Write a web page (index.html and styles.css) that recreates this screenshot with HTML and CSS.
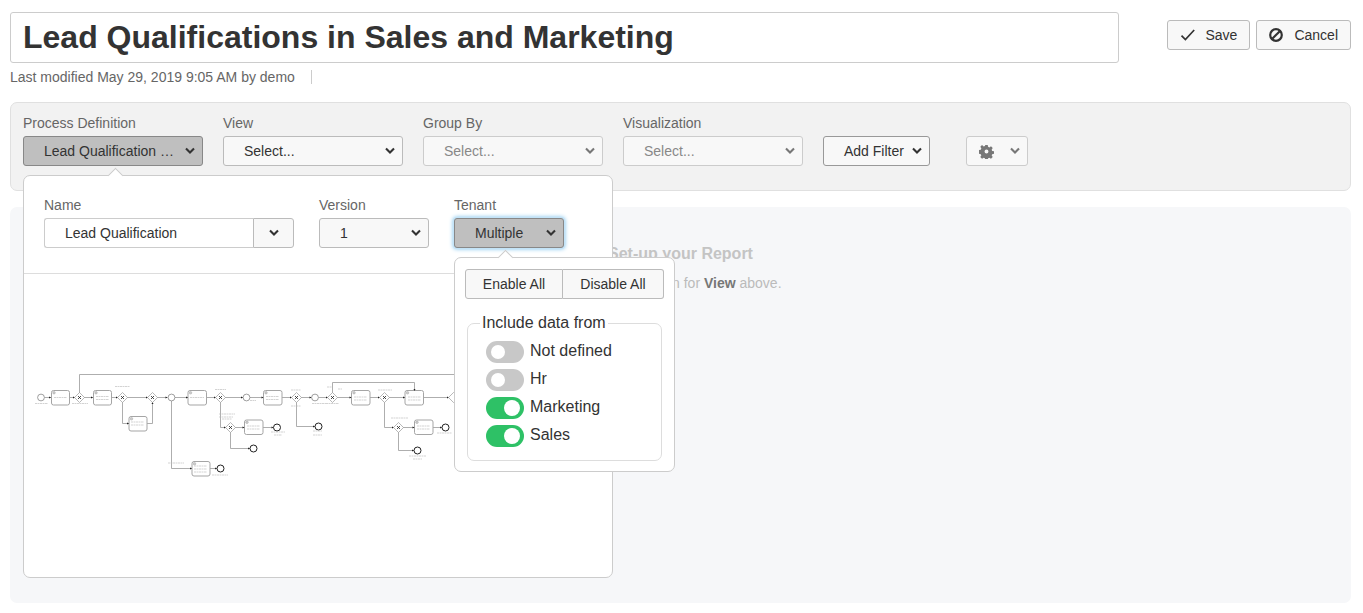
FILE: index.html
```html
<!DOCTYPE html>
<html lang="en">
<head>
<meta charset="utf-8">
<title>Lead Qualifications in Sales and Marketing</title>
<link rel="stylesheet" href="styles.css">
</head>
<body>
<svg class="defs" width="0" height="0" aria-hidden="true">
  <defs>
    <symbol id="chev" viewBox="0 0 10 8"><path d="M1 1.6 5 5.6 9 1.6" fill="none" stroke="currentColor" stroke-width="2.1"/></symbol>
  </defs>
</svg>
<main class="page">
  <header class="head">
    <div class="head-left">
      <input class="title-input" value="Lead Qualifications in Sales and Marketing">
      <div class="meta"><span>Last modified May 29, 2019 9:05 AM by demo</span><span class="meta-sep"></span></div>
    </div>
    <div class="head-actions">
      <button class="btn btn-save"><svg class="ico-check" viewBox="0 0 16 14"><path d="M1.5 7.6 5.4 11.6 14.2 2" fill="none" stroke="#333" stroke-width="1.7"/></svg>Save</button>
      <button class="btn btn-cancel"><svg class="ico-ban" viewBox="0 0 14 14"><circle cx="7" cy="7" r="5.8" fill="none" stroke="#333" stroke-width="2.2"/><path d="M3.2 10.8 10.8 3.2" stroke="#333" stroke-width="2.2"/></svg>Cancel</button>
    </div>
  </header>

  <section class="controls">
    <div class="field">
      <label class="lbl">Process Definition</label>
      <button class="select active"><span>Lead Qualification …</span><svg class="chev"><use href="#chev"/></svg></button>
      <div class="pop pop-def">
        <span class="arrow arrow-def"></span>
        <div class="def-form">
          <div class="def-name">
            <label class="lbl">Name</label>
            <div class="combo">
              <div class="combo-text">Lead Qualification</div>
              <button class="combo-btn"><svg class="chev"><use href="#chev"/></svg></button>
            </div>
          </div>
          <div class="def-version">
            <label class="lbl">Version</label>
            <button class="select"><span>1</span><svg class="chev"><use href="#chev"/></svg></button>
          </div>
          <div class="def-tenant">
            <label class="lbl">Tenant</label>
            <button class="select active focus"><span>Multiple</span><svg class="chev"><use href="#chev"/></svg></button>
            <div class="pop pop-tenant">
              <span class="arrow arrow-tenant"></span>
              <div class="btn-group">
                <button class="grp-btn grp-enable">Enable All</button>
                <button class="grp-btn grp-disable">Disable All</button>
              </div>
              <fieldset class="tenant-set">
                <legend>Include data from</legend>
                <div class="sw-row"><span class="sw"></span>Not defined</div>
                <div class="sw-row"><span class="sw"></span>Hr</div>
                <div class="sw-row"><span class="sw on"></span>Marketing</div>
                <div class="sw-row"><span class="sw on"></span>Sales</div>
              </fieldset>
            </div>
          </div>
        </div>
        <div class="diagram">
          <svg class="bpmn" viewBox="24 274 588 303" width="588" height="303">
            <g class="flow">
              <path d="M44.500 397.500H51M70 397.500H75M84 397.500H93M111.500 397.500H118M127 397.500H148M157 397.500H167.500M175 397.500H188M206.500 397.500H216M225 397.500H243M250 397.500H263.500M282 397.500H292.500M301 397.500H311.500M318.500 397.500H328.500M337 397.500H351.500M370 397.500H380M389 397.500H405M424 397.500H449"/>
              <path d="M79.500 393V374.500H455"/>
              <path d="M122.500 402V423.500H129M147 423.500H152.500V402"/>
              <path d="M171.500 401V468.500H192M210 468.500H217"/>
              <path d="M220.500 402V427.500H226M234.500 427.500H244.500M263 427.500H273.500"/>
              <path d="M230.500 432V448.500H250.500"/>
              <path d="M296.500 402V426.500H315"/>
              <path d="M332.500 393V382.500H414.500V391"/>
              <path d="M384.500 402V427.500H394.500M403 427.500H414.500M433 427.500H442"/>
              <path d="M398.500 432V450.500H414.500"/>
            </g>
            <g class="tasks">
              <rect x="51.500" y="390.500" width="18" height="14.500" rx="2"/>
              <rect x="93.500" y="390.500" width="18" height="14.500" rx="2"/>
              <rect x="129" y="416.500" width="18" height="14.500" rx="2"/>
              <rect x="188" y="390.500" width="18.500" height="14.500" rx="2"/>
              <rect x="192" y="461.500" width="18" height="14.500" rx="2"/>
              <rect x="244.500" y="420" width="18.500" height="14.500" rx="2"/>
              <rect x="263.500" y="390.500" width="18.500" height="14.500" rx="2"/>
              <rect x="351.500" y="390.500" width="18.500" height="14.500" rx="2"/>
              <rect x="405" y="390.500" width="18.500" height="14.500" rx="2"/>
              <rect x="414.500" y="420" width="18.500" height="14.500" rx="2"/>
            </g>
            <g class="task-gear">
              <circle cx="54" cy="392.800" r="1.300"/><circle cx="96" cy="392.800" r="1.300"/><circle cx="131.500" cy="418.800" r="1.300"/><circle cx="190.500" cy="392.800" r="1.300"/><circle cx="194.500" cy="463.800" r="1.300"/><circle cx="247" cy="422.300" r="1.300"/><circle cx="266" cy="392.800" r="1.300"/><circle cx="354" cy="392.800" r="1.300"/><circle cx="407.500" cy="392.800" r="1.300"/><circle cx="417" cy="422.300" r="1.300"/>
            </g>
            <path class="arrows" d="M51 397.500l-2-1v2ZM75 397.500l-2-1v2ZM93 397.500l-2-1v2ZM118 397.500l-2-1v2ZM148 397.500l-2-1v2ZM167.500 397.500l-2-1v2ZM188 397.500l-2-1v2ZM216 397.500l-2-1v2ZM243 397.500l-2-1v2ZM263.500 397.500l-2-1v2ZM292 397.500l-2-1v2ZM311.500 397.500l-2-1v2ZM328 397.500l-2-1v2ZM351.500 397.500l-2-1v2ZM380 397.500l-2-1v2ZM405 397.500l-2-1v2ZM449 397.500l-2-1v2ZM129 423.500l-2-1v2ZM152.500 402l-1 2h2ZM192 468.500l-2-1v2ZM217 468.500l-2-1v2ZM226 427.500l-2-1v2ZM244.500 427.500l-2-1v2ZM273.500 427.500l-2-1v2ZM250 448.500l-2-1v2ZM315 426.500l-2-1v2ZM414.500 391l-1-2h2ZM394 427.500l-2-1v2ZM414.500 427.500l-2-1v2ZM442 427.500l-2-1v2ZM414 450.500l-2-1v2Z"/>
            <g class="gw">
              <path d="M79.500 392.500 84.500 397.500 79.500 402.500 74.500 397.500Z"/>
              <path d="M122.500 392.500 127.500 397.500 122.500 402.500 117.500 397.500Z"/>
              <path d="M152.500 392.500 157.500 397.500 152.500 402.500 147.500 397.500Z"/>
              <path d="M220.500 392.500 225.500 397.500 220.500 402.500 215.500 397.500Z"/>
              <path d="M230.500 422.500 235.500 427.500 230.500 432.500 225.500 427.500Z"/>
              <path d="M296.500 392.500 301.500 397.500 296.500 402.500 291.500 397.500Z"/>
              <path d="M332.500 392.500 337.500 397.500 332.500 402.500 327.500 397.500Z"/>
              <path d="M384.500 392.500 389.500 397.500 384.500 402.500 379.500 397.500Z"/>
              <path d="M398.500 422.500 403.500 427.500 398.500 432.500 393.500 427.500Z"/>
              <path d="M453.500 392.500 458.500 397.500 453.500 402.500 448.500 397.500Z"/>
            </g>
            <path class="gwx" d="M78 396 81 399M81 396 78 399M121 396 124 399M124 396 121 399M151 396 154 399M154 396 151 399M219 396 222 399M222 396 219 399M229 426 232 429M232 426 229 429M295 396 298 399M298 396 295 399M331 396 334 399M334 396 331 399M383 396 386 399M386 396 383 399M397 426 400 429M400 426 397 429"/>
            <g class="start">
              <circle cx="41" cy="397.500" r="3.400"/>
              <circle cx="171.500" cy="397.500" r="3.400"/>
              <circle cx="246.500" cy="397.500" r="3.400"/>
              <circle cx="315" cy="397.500" r="3.400"/>
            </g>
            <g class="end">
              <circle cx="220.500" cy="468.500" r="3.500"/>
              <circle cx="253.500" cy="448.500" r="3.500"/>
              <circle cx="277" cy="427.500" r="3.500"/>
              <circle cx="318.500" cy="426.500" r="3.500"/>
              <circle cx="417.500" cy="450.500" r="3.500"/>
              <circle cx="445.500" cy="427.500" r="3.500"/>
            </g>
            <path class="labels" d="M35 403.500H48M72 403.500H88M96 396.500H109M96 399.500H109M54 397.500H67M215 389.500H226M115 386.500H130M131 422H144M131 425H144M190 397.500H204M168 463H184M194 466H207M194 469H207M194 472H207M212 475H228M219 414H235M219 417H233M222 419H232M247 426H260M247 429H260M266 396.500H279M266 399.500H279M271 432H285M274 435H282M291 390H301M291 406H301M312 403.500H326M313 431H322M313 435H322M250 400.500H256M326 403.500H339M354 397H367M354 400H367M408 397H421M408 400H421M378 390H392M391 418H408M417 426H430M417 429H430M437 433H452M409 456H426M413 459H422M327 387H332M338 389H342"/>
          </svg>
        </div>
      </div>
    </div>
    <div class="field">
      <label class="lbl">View</label>
      <button class="select"><span>Select...</span><svg class="chev"><use href="#chev"/></svg></button>
    </div>
    <div class="field">
      <label class="lbl">Group By</label>
      <button class="select disabled"><span>Select...</span><svg class="chev"><use href="#chev"/></svg></button>
    </div>
    <div class="field">
      <label class="lbl">Visualization</label>
      <button class="select disabled"><span>Select...</span><svg class="chev"><use href="#chev"/></svg></button>
    </div>
    <button class="select add-filter"><span>Add Filter</span><svg class="chev"><use href="#chev"/></svg></button>
    <button class="select disabled gear-btn">
      <svg class="gear" viewBox="0 0 16 16"><path fill="#777" d="M6.700 1h2.600l.4 2 1.300.6 1.800-1.100 1.800 1.800-1.100 1.800.6 1.300 2 .4v2.600l-2 .4-.6 1.300 1.100 1.800-1.800 1.800-1.800-1.100-1.300.6-.4 2H6.700l-.4-2-1.300-.6-1.800 1.100-1.800-1.800 1.100-1.800-.6-1.300-2-.4V6.400l2-.4.6-1.300-1.100-1.800 1.800-1.800L5 2.700l1.300-.6ZM8 5.900a2.100 2.100 0 1 0 0 4.200 2.100 2.100 0 0 0 0-4.200Z" fill-rule="evenodd"/></svg>
      <svg class="chev"><use href="#chev"/></svg>
    </button>
  </section>

  <section class="report">
    <h2>Set-up your Report</h2>
    <p>Select an option for <b>View</b> above.</p>
  </section>
</main>
</body>
</html>
```
FILE: styles.css
```css
* { box-sizing: border-box; }
html, body { margin: 0; height: 100%; }
body {
  font-family: "Liberation Sans", Arial, sans-serif;
  font-size: 14px;
  color: #333;
  background: #fff;
  overflow: hidden;
}
.defs { position: absolute; }
button { font-family: inherit; font-size: 14px; color: #333; cursor: pointer; margin: 0; }

.page { display: flex; flex-direction: column; padding: 12px 12px 10px 10px; height: 613px; }

.head { display: flex; justify-content: space-between; align-items: flex-start; }
.head-left { width: 1109px; }
.title-input {
  display: block; width: 100%; height: 51px; padding: 0 12px;
  border: 1px solid #ccc; border-radius: 3px; outline: 0;
  font: bold 32px "Liberation Sans", Arial, sans-serif; color: #333;
}
.meta { display: flex; align-items: center; height: 16px; margin-top: 6px; color: #666; line-height: 16px; }
.meta-sep { width: 1px; height: 14px; margin-left: 16px; background: #ccc; }
.head-actions { display: flex; gap: 6px; padding-top: 8px; }

.btn {
  display: flex; align-items: center; height: 30px; padding: 0 12px;
  background: #f8f8f8; border: 1px solid #bbb; border-radius: 3px;
}
.ico-check { width: 16px; height: 14px; margin-right: 9px; }
.ico-ban { width: 14px; height: 14px; margin-right: 11px; }

.controls {
  position: relative; display: flex; align-items: flex-end; gap: 20px;
  height: 89px; margin-top: 17px; padding: 0 12px 24px 12px;
  background: #f2f2f2; border: 1px solid #e0e0e0; border-radius: 7px;
}
.field { position: relative; display: flex; flex-direction: column; }
.lbl { display: block; height: 16px; margin-bottom: 5px; line-height: 16px; color: #666; white-space: nowrap; }
.select {
  display: flex; align-items: center; justify-content: space-between;
  width: 180px; height: 30px; padding: 0 7px 0 20px;
  background: #f8f8f8; border: 1px solid #bbb; border-radius: 3px; white-space: nowrap;
}
.chev { width: 10px; height: 8px; flex: none; }
.select.active { background: #bfbfbf; border-color: #888; }
.select.focus { box-shadow: 0 0 0 1px #c3e3f7, 0 0 4px 1px #7cc3ee; }
.select.disabled { color: #888; border-color: #ccc; }
.select.disabled .chev { color: #777; }
.add-filter { width: 107px; border-color: #999; }
.gear-btn { width: 62px; margin-left: 16px; padding: 0 7px 0 12px; }
.gear { width: 15px; height: 15px; }

.pop { position: absolute; background: #fff; border: 1px solid #ccc; border-radius: 7px; z-index: 2; }
.arrow {
  position: absolute; width: 11px; height: 11px; background: #fff;
  border: 1px solid #ccc; border-right: 0; border-bottom: 0; transform: rotate(45deg);
}
.pop-def { left: 0; top: 60px; width: 590px; height: 403px; display: flex; flex-direction: column; }
.arrow-def { left: 86px; top: -6px; }
.def-form { display: flex; flex: none; height: 98px; padding: 21px 20px 0 20px; border-bottom: 1px solid #ddd; }
.def-name { width: 250px; margin-right: 25px; }
.def-version { width: 110px; margin-right: 25px; }
.def-tenant { position: relative; width: 110px; }
.def-version .select, .def-tenant .select { width: 110px; }
.combo { display: flex; height: 30px; }
.combo-text {
  width: 209px; padding-left: 20px; line-height: 28px; background: #fff;
  border: 1px solid #ccc; border-right: 0; border-radius: 3px 0 0 3px;
}
.combo-btn {
  display: flex; align-items: center; justify-content: center; width: 41px; padding: 0;
  background: #f8f8f8; border: 1px solid #bbb; border-radius: 0 3px 3px 0;
}
.diagram { flex: 1; overflow: hidden; border-radius: 0 0 7px 7px; }
.bpmn { display: block; }
.flow { fill: none; stroke: #999; stroke-width: .8; }
.tasks rect { fill: #fff; stroke: #a5a5a5; stroke-width: 1; }
.task-gear circle { fill: #ccc; stroke: #999; stroke-width: .4; }
.arrows { fill: #222; }
.gw path { fill: #fff; stroke: #999; stroke-width: .7; }
.gwx { fill: none; stroke: #222; stroke-width: .8; }
.start circle { fill: #fff; stroke: #777; stroke-width: .7; }
.end circle { fill: #fff; stroke: #222; stroke-width: 1; }
.labels { fill: none; stroke: #b5b5b5; stroke-width: .6; stroke-dasharray: 2 .5; }

.pop-tenant { left: 0; top: 60px; width: 221px; height: 215px; padding: 11px 10px 0; font-size: 16px; }
.arrow-tenant { left: 45px; top: -6px; }
.btn-group { display: flex; width: 199px; height: 30px; }
.grp-btn {
  height: 30px; padding: 0; background: #f8f8f8; border: 1px solid #bbb;
  font-size: 14px;
}
.grp-enable { width: 98px; border-radius: 3px 0 0 3px; }
.grp-disable { width: 101px; border-left: 0; border-radius: 0 3px 3px 0; }
.tenant-set {
  width: 195px; height: 147px; margin: 15px 0 0 2px; padding: 9px 0 0 18px;
  border: 1px solid #ddd; border-radius: 7px;
}
.tenant-set legend { padding: 0 2px; margin-left: -6px; line-height: 18px; font-size: 16px; }
.sw-row { display: flex; align-items: flex-start; height: 28px; line-height: 19px; white-space: nowrap; }
.sw { position: relative; width: 38px; height: 22px; margin-right: 6px; border-radius: 11px; background: #c8c8c8; flex: none; }
.sw::after { content: ""; position: absolute; left: 5px; top: 4px; width: 14px; height: 14px; border-radius: 50%; background: #fff; }
.sw.on { background: #2ec166; }
.sw.on::after { left: 18px; top: 3px; width: 16px; height: 16px; }

.report {
  flex: 1; margin-top: 16px; padding-top: 38px; text-align: center;
  background: #f6f7f9; border-radius: 7px; color: #bbb;
}
.report h2 { margin: 0 0 12px; font-size: 16px; line-height: 18px; color: #c4c4c4; }
.report p { margin: 0; font-size: 14px; line-height: 16px; color: #bbb; }
.report b { color: #777; }
```
